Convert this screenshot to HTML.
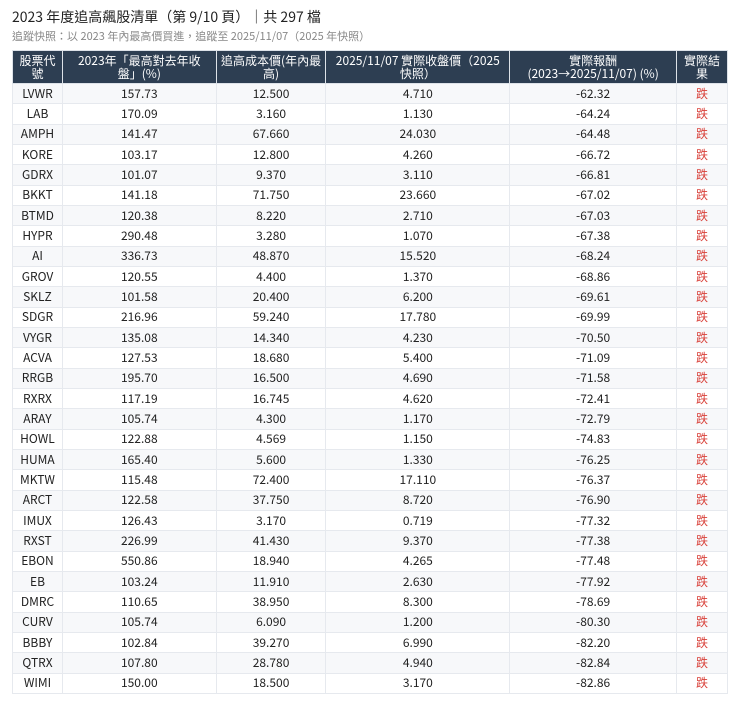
<!DOCTYPE html><html><head><meta charset="utf-8"><style>
body{margin:0;background:#fff;width:740px;height:706px;overflow:hidden;font-family:"Liberation Sans","Noto Sans CJK TC",sans-serif;color:#222}
h1{position:absolute;left:12px;top:7px;margin:0;font-size:14px;font-weight:normal;color:#222;font-family:"Noto Sans CJK TC",sans-serif}
.sub{position:absolute;left:12px;top:28px;font-size:11px;color:#888;font-family:"Noto Sans CJK TC",sans-serif}
table{position:absolute;left:12px;top:50px;border-collapse:collapse;width:716px;font-family:"Noto Sans CJK TC",sans-serif;font-size:12px}
th{background:#2d3e52;color:#fff;font-weight:normal;height:32px;line-height:13px;padding:0 2px;border:1px solid #dde2e8;font-size:12px}
tr{height:20.33px}
td{padding:0;text-align:center;border:1px solid #e6e9ee;line-height:18px}
tr:nth-child(even) td{background:#f7f8fa}
td.r{color:#d9413a}
</style></head><body>
<h1>2023 年度追高飆股清單（第 9/10 頁）｜共 297 檔</h1>
<div class="sub">追蹤快照：以 2023 年內最高價買進，追蹤至 2025/11/07（2025 年快照）</div>
<table>
<colgroup><col style="width:50px"><col style="width:154px"><col style="width:110px"><col style="width:184px"><col style="width:167px"><col style="width:51px"></colgroup>
<tr style="height:33px"><th>股票代<br>號</th><th>2023年「最高對去年收<br>盤」(%)</th><th>追高成本價(年內最<br>高)</th><th>2025/11/07 實際收盤價（2025<br>快照）</th><th>實際報酬<br>(2023→2025/11/07) (%)</th><th>實際結<br>果</th></tr>
<tr><td>LVWR</td><td>157.73</td><td>12.500</td><td>4.710</td><td>-62.32</td><td class="r">跌</td></tr>
<tr><td>LAB</td><td>170.09</td><td>3.160</td><td>1.130</td><td>-64.24</td><td class="r">跌</td></tr>
<tr><td>AMPH</td><td>141.47</td><td>67.660</td><td>24.030</td><td>-64.48</td><td class="r">跌</td></tr>
<tr><td>KORE</td><td>103.17</td><td>12.800</td><td>4.260</td><td>-66.72</td><td class="r">跌</td></tr>
<tr><td>GDRX</td><td>101.07</td><td>9.370</td><td>3.110</td><td>-66.81</td><td class="r">跌</td></tr>
<tr><td>BKKT</td><td>141.18</td><td>71.750</td><td>23.660</td><td>-67.02</td><td class="r">跌</td></tr>
<tr><td>BTMD</td><td>120.38</td><td>8.220</td><td>2.710</td><td>-67.03</td><td class="r">跌</td></tr>
<tr><td>HYPR</td><td>290.48</td><td>3.280</td><td>1.070</td><td>-67.38</td><td class="r">跌</td></tr>
<tr><td>AI</td><td>336.73</td><td>48.870</td><td>15.520</td><td>-68.24</td><td class="r">跌</td></tr>
<tr><td>GROV</td><td>120.55</td><td>4.400</td><td>1.370</td><td>-68.86</td><td class="r">跌</td></tr>
<tr><td>SKLZ</td><td>101.58</td><td>20.400</td><td>6.200</td><td>-69.61</td><td class="r">跌</td></tr>
<tr><td>SDGR</td><td>216.96</td><td>59.240</td><td>17.780</td><td>-69.99</td><td class="r">跌</td></tr>
<tr><td>VYGR</td><td>135.08</td><td>14.340</td><td>4.230</td><td>-70.50</td><td class="r">跌</td></tr>
<tr><td>ACVA</td><td>127.53</td><td>18.680</td><td>5.400</td><td>-71.09</td><td class="r">跌</td></tr>
<tr><td>RRGB</td><td>195.70</td><td>16.500</td><td>4.690</td><td>-71.58</td><td class="r">跌</td></tr>
<tr><td>RXRX</td><td>117.19</td><td>16.745</td><td>4.620</td><td>-72.41</td><td class="r">跌</td></tr>
<tr><td>ARAY</td><td>105.74</td><td>4.300</td><td>1.170</td><td>-72.79</td><td class="r">跌</td></tr>
<tr><td>HOWL</td><td>122.88</td><td>4.569</td><td>1.150</td><td>-74.83</td><td class="r">跌</td></tr>
<tr><td>HUMA</td><td>165.40</td><td>5.600</td><td>1.330</td><td>-76.25</td><td class="r">跌</td></tr>
<tr><td>MKTW</td><td>115.48</td><td>72.400</td><td>17.110</td><td>-76.37</td><td class="r">跌</td></tr>
<tr><td>ARCT</td><td>122.58</td><td>37.750</td><td>8.720</td><td>-76.90</td><td class="r">跌</td></tr>
<tr><td>IMUX</td><td>126.43</td><td>3.170</td><td>0.719</td><td>-77.32</td><td class="r">跌</td></tr>
<tr><td>RXST</td><td>226.99</td><td>41.430</td><td>9.370</td><td>-77.38</td><td class="r">跌</td></tr>
<tr><td>EBON</td><td>550.86</td><td>18.940</td><td>4.265</td><td>-77.48</td><td class="r">跌</td></tr>
<tr><td>EB</td><td>103.24</td><td>11.910</td><td>2.630</td><td>-77.92</td><td class="r">跌</td></tr>
<tr><td>DMRC</td><td>110.65</td><td>38.950</td><td>8.300</td><td>-78.69</td><td class="r">跌</td></tr>
<tr><td>CURV</td><td>105.74</td><td>6.090</td><td>1.200</td><td>-80.30</td><td class="r">跌</td></tr>
<tr><td>BBBY</td><td>102.84</td><td>39.270</td><td>6.990</td><td>-82.20</td><td class="r">跌</td></tr>
<tr><td>QTRX</td><td>107.80</td><td>28.780</td><td>4.940</td><td>-82.84</td><td class="r">跌</td></tr>
<tr><td>WIMI</td><td>150.00</td><td>18.500</td><td>3.170</td><td>-82.86</td><td class="r">跌</td></tr>
</table>
</body></html>
